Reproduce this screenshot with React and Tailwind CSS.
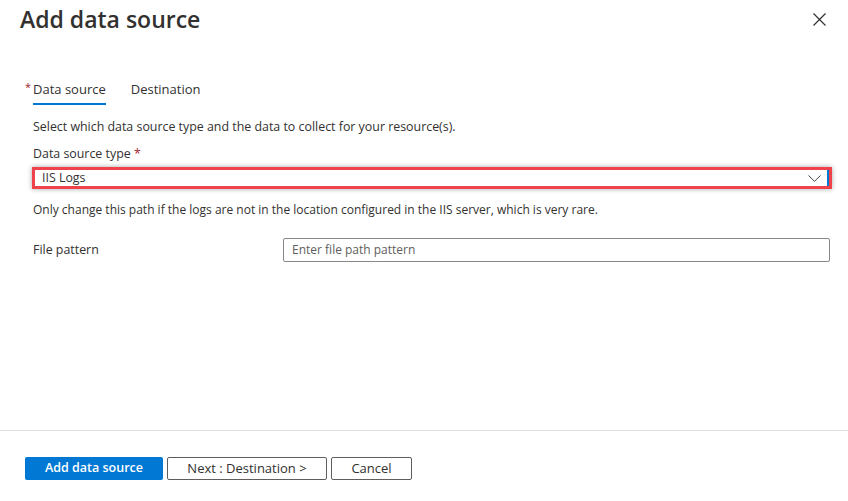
import React from "react";

const font = { fontFamily: '"Open Sans", "Noto Sans", sans-serif' };

const Chevron = () => (
  <svg width="13" height="7" viewBox="0 0 13 7" fill="none">
    <path d="M0.5 0.5 L6.5 6.3 L12.5 0.5" stroke="#323130" strokeWidth="0.9" />
  </svg>
);

export default function App() {
  return (
    <div
      className="w-[848px] h-[501px] bg-white text-[#323130] flex flex-col overflow-hidden"
      style={font}
    >
      {/* header */}
      <div className="flex items-start justify-between pl-[20px] pr-[22px] pt-[3px]">
        <h1 className="text-[23px] font-semibold leading-[32px]">
          Add data source
        </h1>
        <button className="mt-[10px] text-[#323130]">
          <svg width="13" height="13" viewBox="0 0 13 13">
            <path d="M0.5 0.5 L12.5 12.5 M12.5 0.5 L0.5 12.5" stroke="#323130" strokeWidth="1.2" />
          </svg>
        </button>
      </div>

      {/* tabs */}
      <div className="flex gap-[25px] pl-[33px] mt-[45px] text-[13px]">
        <div className="relative flex flex-col">
          <span className="absolute left-[-8px] top-[-1px] text-[#a4262c] text-[11px]">*</span>
          <span className="leading-[18px] font-medium">Data source</span>
          <span className="mt-[5px] h-[2px] bg-[#0078d4]" />
        </div>
        <span className="leading-[18px]">Destination</span>
      </div>

      {/* body */}
      <div className="px-[33px] text-[12px] flex flex-col">
        <p className="mt-[13px] leading-[18px] text-[12.4px]">
          Select which data source type and the data to collect for your resource(s).
        </p>
        <label className="mt-[9px] leading-[18px] text-[12.4px]">
          Data source type <span className="text-[#a4262c]">*</span>
        </label>
        <div className="mt-[4px] ml-[-1px] mr-[-17px] border-[3px] border-[#f0424a] shadow-[0_0_5px_rgba(0,0,0,0.35)]">
          <div className="h-[16px] flex items-center justify-between pl-[7px] pr-[6px] border-r-2 border-[#0078d4]">
            <span className="text-[12.4px]">IIS Logs</span>
            <Chevron />
          </div>
        </div>
        <p className="mt-[12px] leading-[18px]">
          Only change this path if the logs are not in the location configured in the IIS server, which is very rare.
        </p>
        <div className="mt-[19px] flex items-center">
          <span className="w-[250px] text-[12.4px]">File pattern</span>
          <div className="flex-1 -mr-[15px] h-[24px] border border-[#8a8886] rounded-[2px] flex items-center px-[8px] text-[#605e5c]">
            Enter file path pattern
          </div>
        </div>
      </div>

      <div className="flex-1" />

      {/* footer */}
      <div className="border-t border-[#e1dfdd] h-[71px] flex items-start gap-[4px] pl-[25px] pt-[26px] text-[12.5px] font-semibold">
        <button className="w-[138px] h-[23px] bg-[#0078d4] text-white rounded-[2px]">
          Add data source
        </button>
        <button className="w-[160px] h-[23px] border border-[#605e5c] rounded-[2px] font-normal text-[13px]">
          Next : Destination &gt;
        </button>
        <button className="w-[81px] h-[23px] border border-[#605e5c] rounded-[2px] font-normal text-[13px]">
          Cancel
        </button>
      </div>
    </div>
  );
}
